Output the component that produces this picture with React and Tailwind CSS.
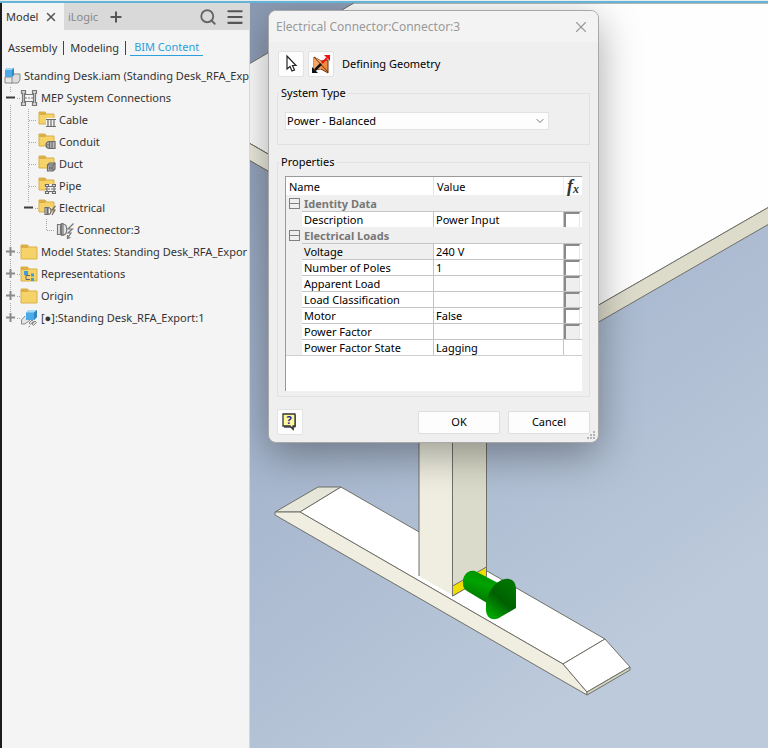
import { useState } from "react";
import { Menu, Plus, Search, X, ChevronDown } from "lucide-react";

const TREE = [
  { label: "MEP System Connections", depth: 1, toggle: "minus", icon: "mep" },
  { label: "Cable", depth: 2, icon: "cable" },
  { label: "Conduit", depth: 2, icon: "conduit" },
  { label: "Duct", depth: 2, icon: "duct" },
  { label: "Pipe", depth: 2, icon: "pipe" },
  { label: "Electrical", depth: 2, toggle: "minus", icon: "electrical" },
  { label: "Connector:3", depth: 3, icon: "connector" },
  { label: "Model States: Standing Desk_RFA_Expor", depth: 1, toggle: "plus", icon: "folder" },
  { label: "Representations", depth: 1, toggle: "plus", icon: "views" },
  { label: "Origin", depth: 1, toggle: "plus", icon: "folder" },
  { label: "[●]:Standing Desk_RFA_Export:1", depth: 1, toggle: "plus", icon: "part", last: true },
];

const GROUPS = [
  {
    title: "Identity Data",
    rows: [{ name: "Description", value: "Power Input", check: "on" }],
  },
  {
    title: "Electrical Loads",
    rows: [
      { name: "Voltage", value: "240 V", check: "on", selected: true },
      { name: "Number of Poles", value: "1", check: "on" },
      { name: "Apparent Load", value: "", check: "off" },
      { name: "Load Classification", value: "", check: "off" },
      { name: "Motor", value: "False", check: "on" },
      { name: "Power Factor", value: "", check: "off" },
      { name: "Power Factor State", value: "Lagging" },
    ],
  },
];

function FolderShape({ small }) {
  return small ? (
    <>
      <path d="M1 2h6l1.500 2H16v10H1z" fill="#f6d368" stroke="#d9b04a" strokeWidth="1" />
      <path d="M1 2h6l1.500 2L7 5H1z" fill="#dcae45" />
    </>
  ) : (
    <>
      <path d="M1 3h6.500l1.500 2H17v12H1z" fill="#f6d368" stroke="#d9b04a" strokeWidth="1" />
      <path d="M1 3h6.500l1.500 2L7.500 6H1z" fill="#dcae45" />
    </>
  );
}

function TreeIcon({ name }) {
  const gray = { fill: "none", stroke: "#6b6b6b", strokeWidth: 1.2 };
  return (
    <svg className="h-5 w-[18px] shrink-0" viewBox="0 0 18 20" aria-hidden="true">
      {name === "mep" && (
        <g fill="none" stroke="#777" strokeWidth="1.200">
          <path d="M1.500 2.500h4v3h-1v9h1v3h-4v-3h1v-9h-1zM12.500 2.500h4v3h-1v9h1v3h-4v-3h1v-9h-1z" fill="#d4d4d4" />
          <path d="M5 6.500h8M5 13.500h8" />
          <path d="M5 10h8" strokeDasharray="2 1" strokeWidth="1" />
        </g>
      )}
      {["cable", "conduit", "duct", "pipe", "electrical"].includes(name) && <FolderShape small />}
      {name === "cable" && (
        <g {...gray}>
          <path d="M8 8h10v9H8z" fill="#f4f4f4" stroke="none" />
          <path d="M8 9.500h10M8 16.500h10M10 9.500v7M13 9.500v7M16 9.500v7" />
        </g>
      )}
      {name === "conduit" && (
        <g {...gray}>
          <path d="M11 9.500h6v7h-6c-4-1-4-6 0-7z" fill="#bbb" />
          <path d="M11.500 9.500v7M14 9.500v7M8.500 13H12" />
        </g>
      )}
      {name === "duct" && (
        <g {...gray}>
          <path d="M9.500 11l2-2H17v6l-2 2H9.500z" fill="#bbb" />
          <path d="M9.500 11H15v6M15 11l2-2M11.500 13h2v2h-2z" />
        </g>
      )}
      {name === "pipe" && (
        <g {...gray}>
          <path d="M7 8h11v10H7z" fill="#f4f4f4" stroke="none" />
          <path d="M7.500 8.500h3v2h-3zM14.500 8.500h3v2h-3zM7.500 15.500h3v2h-3zM14.500 15.500h3v2h-3zM9 10.500v5M16 10.500v5M10.500 10.500h4M10.500 15.500h4" />
          <path d="M7 13h11" strokeDasharray="2 1" />
        </g>
      )}
      {name === "electrical" && (
        <g {...gray}>
          <path d="M6.500 9h7v8h-7z" fill="#f4f4f4" stroke="none" />
          <path d="M7 9.500h2v7H7zM10 9.500c4 0 4 7 0 7zM17.500 8l-3.500 4h3l-3 5" />
        </g>
      )}
      {name === "connector" && (
        <g {...gray} stroke="#777">
          <path d="M1.500 4.500h3v10h-3zM5.500 3.500h1.500v12H5.500zM7 4c5 0 5 11 0 11z" fill="#e4e4e4" />
          <path d="M17.500 3.500L12 9h4.500L12 13h3l-3.500 5M11.500 15v3.500l3-1" />
        </g>
      )}
      {(name === "folder" || name === "views") && <FolderShape />}
      {name === "views" && (
        <g>
          <path d="M4 7h4v4H4zM11 9.500h3v3h-3zM11 14h3v3h-3z" fill="#3d9fd6" />
          <path d="M6 11v4.500h4M6 11.500h4" fill="none" stroke="#666" />
        </g>
      )}
      {name === "part" && (
        <g>
          <path d="M5 8L1.500 12v4H5l5-4" fill="#e4e4e4" stroke="#888" />
          <path d="M6 4.500l3-2.500h8v7l-3 3H6z" fill="#4cabe6" />
          <path d="M6 4.500l3-2.500h8l-3 2.500z" fill="#a6dbf7" />
          <path d="M14 4.500L17 2v7l-3 3z" fill="#2f86c0" />
          <path d="M9 15l3-3 1.500 1.500-3 3zM12 16l3-3 1.500 1.500-3 3zM10 18l-1.500 1" fill="#ddd" stroke="#888" />
        </g>
      )}
    </svg>
  );
}

function Guide({ line, half, branch }) {
  return (
    <svg className="h-[22px] w-[18px] shrink-0" viewBox="0 0 18 22" aria-hidden="true">
      <g stroke="#a8a8a8" strokeDasharray="1 1">
        {line && <path d={half ? "M8.500 0v11" : "M8.500 0v22"} />}
        {branch && <path d="M9 11.500h8" />}
      </g>
    </svg>
  );
}

function Toggle({ kind, label, last }) {
  return (
    <button type="button" aria-label={`Toggle ${label}`} className="h-[22px] w-[18px] shrink-0">
      <svg className="h-[22px] w-[18px]" viewBox="0 0 18 22">
        <path d={last ? "M8.500 0v5" : "M8.500 0v5M8.500 18v4"} stroke="#a8a8a8" strokeDasharray="1 1" />
        <path d="M15 11.500h3" stroke="#a8a8a8" strokeDasharray="1 1" />
        {kind === "minus" ? (
          <path d="M4 10.500h9" stroke="#3c3c3c" strokeWidth="2" />
        ) : (
          <path d="M4 10.500h9M8.500 6v9" stroke="#8a8a8a" strokeWidth="2" />
        )}
      </svg>
    </button>
  );
}

function TreeRow({ item }) {
  const { label, depth, toggle, icon, last } = item;
  return (
    <li className="flex h-[22px] items-center">
      {depth > 1 && <Guide line />}
      {depth > 2 && <Guide />}
      {toggle ? <Toggle kind={toggle} label={label} last={last || depth === 2} /> : <Guide line half={depth === 3} branch />}
      <TreeIcon name={icon} />
      <span className="ml-[3px] whitespace-nowrap">{label}</span>
    </li>
  );
}

function BrowserPanel() {
  return (
    <aside className="w-[250px] shrink-0 overflow-hidden border-r border-l-2 border-r-[#d4d8de] border-l-[#1c1c1f] bg-[#f4f4f4] text-[#333]">
      <div className="flex h-[27px] items-center bg-[#d9d9d9]">
        <div className="flex h-full w-[62px] items-center justify-between bg-[#f4f4f4] pr-1.5 pl-1">
          <button type="button">Model</button>
          <button type="button" aria-label="Close Model tab">
            <X className="size-3.5 text-[#555]" strokeWidth={2.5} />
          </button>
        </div>
        <button type="button" className="ml-1 text-[#888]">iLogic</button>
        <button type="button" aria-label="Add tab" className="ml-2.5">
          <Plus className="size-4 text-[#555]" strokeWidth={3} />
        </button>
        <button type="button" aria-label="Search" className="ml-auto">
          <Search className="size-[18px] text-[#666]" strokeWidth={2.5} />
        </button>
        <button type="button" aria-label="Menu" className="mr-1 ml-2">
          <Menu className="size-5 text-[#555]" strokeWidth={2.5} />
        </button>
      </div>

      <nav className="flex h-[35px] items-center pl-1">
        <a href="#assembly" className="px-0.5">Assembly</a>
        <span className="mx-1 h-3.5 w-px bg-[#444]" />
        <a href="#modeling" className="px-0.5">Modeling</a>
        <span className="mx-1 h-3.5 w-px bg-[#444]" />
        <a href="#bim" className="border-b border-[#2ba0dc] px-1 text-[#2ba0dc]">BIM Content</a>
      </nav>

      <div className="flex h-[22px] items-center pl-0.5">
        <svg className="h-5 w-[18px] shrink-0" viewBox="0 0 18 20" aria-hidden="true">
          <path d="M7 10l2-2h7v6l-2 3H7z" fill="#ddd" stroke="#888" />
          <path d="M1 11h7v6H1z" fill="#e8e8e8" stroke="#888" />
          <path d="M1 4l2-2h7v7l-2 2H1z" fill="#4cabe6" />
          <path d="M1 4l2-2h7L8 4z" fill="#9ad4f5" />
          <path d="M8 4l2-2v7l-2 2z" fill="#2f86c0" />
        </svg>
        <span className="ml-0.5 whitespace-nowrap">Standing Desk.iam (Standing Desk_RFA_Exp</span>
      </div>
      <ul>
        {TREE.map((item) => (
          <TreeRow key={item.label} item={item} />
        ))}
      </ul>
    </aside>
  );
}

function Scene() {
  return (
    <svg className="absolute inset-0 h-full w-full" viewBox="250 3 518 745" preserveAspectRatio="xMinYMin slice" aria-label="Standing desk model">
      <defs>
        <linearGradient id="sky" x1="0" y1="0" x2="0.500" y2="1">
          <stop offset="0" stopColor="#8c9bb4" />
          <stop offset="0.500" stopColor="#a6b6cd" />
          <stop offset="1" stopColor="#bdcadc" />
        </linearGradient>
        <linearGradient id="shaft" x1="0.700" y1="0" x2="0.300" y2="1">
          <stop offset="0" stopColor="#008a00" />
          <stop offset="0.400" stopColor="#00a400" />
          <stop offset="1" stopColor="#007000" />
        </linearGradient>
        <linearGradient id="cone" x1="0.800" y1="0.200" x2="0.300" y2="1">
          <stop offset="0" stopColor="#007200" />
          <stop offset="0.450" stopColor="#006000" />
          <stop offset="1" stopColor="#00a600" />
        </linearGradient>
      </defs>
      <path d="M250 3h518v745H250z" fill="url(#sky)" />
      <g stroke="#6f7068" strokeWidth="1" strokeLinejoin="round">
        {/* desk top */}
        <path d="M249 64L354 3H769V207L564 325 249 143z" fill="#fefefe" />
        <path d="M249 143L564 325 769 207V224L564 342 249 160z" fill="#dddccb" />
        <path d="M249 143L564 325V342L249 160z" fill="#ecebdd" />

        {/* foot */}
        <path d="M275 512L318 487H341L300 512z" fill="#e7e8da" />
        <path d="M300 512L341 487 605 639 563 664z" fill="#fff" />
        <path d="M275 512H300L563 664 587 692V695L275 515z" fill="#efeee0" />
        <path d="M563 664L605 639 630 667 587 692z" fill="#fff" />
        <path d="M587 692L630 667V670L587 695z" fill="#d5d5c4" />

        {/* leg */}
        <path d="M419 430H452.500V595L419 576z" fill="#efeee0" stroke="none" />
        <path d="M452.500 430H486.500V576L452.500 596z" fill="#dadbca" />
        <path d="M419 430V576" />
        <path d="M452.500 586L486.500 567V576.500L452.500 596z" fill="#f0de00" />
      </g>
      <path d="M463 583C462 576 468 569 475 571L498 583 487 603 467 591C464 589 463 587 463 583z" fill="url(#shaft)" />
      <path d="M486 606C486 592 498 577 509 579 514 580 516 584 516 589V608L498 618.500C490 621 485 616 486 606z" fill="url(#cone)" />
    </svg>
  );
}

function PropertyTable() {
  return (
    <table className="w-full table-fixed border-separate border-spacing-0 text-left">
      <colgroup>
        <col className="w-4" />
        <col className="w-[132px]" />
        <col />
        <col className="w-[18px]" />
      </colgroup>
      <thead>
        <tr className="h-[18px]">
          <th colSpan={2} className="border-r border-[#e4e4e4] p-0 pl-[3px] font-normal">Name</th>
          <th className="border-r border-[#eee] p-0 pl-[3px] font-normal">Value</th>
          <th className="p-0 font-['Liberation_Serif',serif] text-lg font-bold text-[#333] italic">
            <span className="flex h-[18px] items-center justify-center leading-[18px]">
              f<sub className="text-xs">x</sub>
            </span>
          </th>
        </tr>
      </thead>
      {GROUPS.map((group) => (
        <tbody key={group.title}>
          <tr className="h-4 bg-[#efefef]">
            <td className="p-0">
              <button type="button" aria-label={`Collapse ${group.title}`} className="ml-[3px] flex size-[11px] items-center border border-[#808080]">
                <span className="h-px w-full bg-[#808080]" />
              </button>
            </td>
            <th colSpan={3} className="p-0 pl-0.5 font-bold text-[#777]">{group.title}</th>
          </tr>
          {group.rows.map((row) => (
            <tr key={row.name} className="h-4">
              <td className="bg-[#efefef] p-0" />
              <td className={`border-t border-r border-[#c4c4c4] p-0 pl-0.5 ${row.selected ? "bg-[#efefef]" : ""}`}>{row.name}</td>
              <td className="border-t border-r border-[#c4c4c4] p-0 pl-0.5">{row.value}</td>
              <td className="border-t border-[#c4c4c4] p-0">
                {row.check && (
                  <input
                    type="checkbox"
                    aria-label={`Export ${row.name}`}
                    disabled={row.check === "off"}
                    className="block h-[15px] w-4 appearance-none border-t-2 border-r border-l-2 border-t-[#8a8a8a] border-r-[#e6e6e6] border-l-[#8a8a8a] bg-white disabled:bg-[#efefef]"
                  />
                )}
              </td>
            </tr>
          ))}
        </tbody>
      ))}
      <tfoot>
        <tr>
          <td colSpan={4} className="h-px bg-[#d0d0d0] p-0" />
        </tr>
      </tfoot>
    </table>
  );
}

function ConnectorDialog() {
  const [system, setSystem] = useState("balanced");
  const tool = "flex size-[26px] items-center justify-center rounded-xs border border-[#e2e2e2] bg-[#fdfdfd]";
  const action = "h-[23px] w-[82px] rounded-xs border border-[#dedede] bg-[#fdfdfd]";

  return (
    <section
      role="dialog"
      aria-label="Electrical Connector"
      className="absolute top-[7px] left-[18px] flex w-[331px] flex-col overflow-hidden rounded-lg border border-[#a8a8a8] bg-[#efefef] pb-[7px] text-black shadow-[0_12px_40px_rgba(0,0,0,0.35)]"
    >
      <header className="flex h-[31px] shrink-0 items-center justify-between bg-[#f3f3f3] pr-2 pl-[7px] text-[#999]">
        <h1 className="text-xs">Electrical Connector:Connector:3</h1>
        <button type="button" aria-label="Close">
          <X className="size-[18px]" strokeWidth={1.5} />
        </button>
      </header>

      <div className="flex items-center gap-1 px-[9px] pt-[9px]">
        <button type="button" aria-label="Select" className={tool}>
          <svg className="h-5 w-4" viewBox="0 0 16 20">
            <path d="M4 2v13l3-2.500 2 4.500 2.500-1-2-4.500h3.500z" fill="#fff" stroke="#222" strokeWidth="1.200" />
          </svg>
        </button>
        <button type="button" aria-label="Flip direction" className={tool}>
          <svg className="size-5" viewBox="0 0 20 20">
            <path d="M3 3l7 4 7-1v13l-7-4-7 1z" fill="#f08a3c" stroke="#6b3512" />
            <path d="M3 3l7 4v8l-7 1z" fill="#f7a565" />
            <path d="M3 3l14 15" stroke="#6b3512" />
            <path d="M11 9l5-5" stroke="#e11" strokeWidth="2" />
            <path d="M13 1h6v6z" fill="#e11" />
            <path d="M10 10l-6 6" stroke="#111" strokeWidth="2.500" />
            <path d="M1 13v6h6z" fill="#111" />
          </svg>
        </button>
        <span className="ml-1">Defining Geometry</span>
      </div>

      <fieldset className="mx-2 mt-2 h-[60px] border border-[#e2e2e2] px-[7px] pt-[11px]">
        <legend className="-ml-1.5 px-0.5 leading-4">System Type</legend>
        <div className="relative w-[264px]">
          <select
            aria-label="System Type"
            value={system}
            onChange={(e) => setSystem(e.target.value)}
            className="block h-[18px] w-full appearance-none border border-[#e2e2e2] bg-[#fdfdfd] pl-px"
          >
            <option value="balanced">Power - Balanced</option>
            <option value="unbalanced">Power - Unbalanced</option>
          </select>
          <ChevronDown className="pointer-events-none absolute top-[3px] right-[3px] size-3 text-[#777]" />
        </div>
      </fieldset>

      <fieldset className="mx-2 mt-[9px] h-[243px] border border-[#e2e2e2] px-[7px] pt-1.5">
        <legend className="-ml-1.5 px-0.5 leading-4">Properties</legend>
        <div className="h-[215px] overflow-hidden border-t border-l border-[#9a9a9a] bg-white leading-[15px]">
          <PropertyTable />
        </div>
      </fieldset>

      <footer className="flex items-center gap-2 px-2 pt-3">
        <button type="button" aria-label="Help" className={tool}>
          <svg className="size-5" viewBox="0 0 20 20">
            <path d="M4 3h12v12l-2 1v3l-3-3H4z" fill="#777" />
            <path d="M3 2h12v12h-2v3l-3-3H3z" fill="#fdfa9c" stroke="#333" strokeWidth="1.300" />
            <text x="9" y="12" textAnchor="middle" fontSize="11" fontWeight="bold" fill="#22229a">?</text>
          </svg>
        </button>
        <button type="button" className={`ml-auto ${action}`}>OK</button>
        <button type="button" className={action}>Cancel</button>
      </footer>
      <svg className="absolute right-0.5 bottom-0.5 size-2.5" viewBox="0 0 10 10" aria-hidden="true">
        <path d="M7 1h2v2H7zM4 4h2v2H4zM7 4h2v2H7zM1 7h2v2H1zM4 7h2v2H4zM7 7h2v2H7z" fill="#b4b4b4" />
      </svg>
    </section>
  );
}

export default function App() {
  return (
    <div className="flex min-h-screen flex-col bg-[#f4f4f4] font-['Noto_Sans',sans-serif] text-[11px] leading-4">
      <div className="h-[3px] shrink-0 border-b-2 border-[#62b5d8] bg-[#ececec]" />
      <div className="flex flex-1">
        <BrowserPanel />
        <main className="relative min-w-0 flex-1 overflow-hidden">
          <Scene />
          <ConnectorDialog />
        </main>
      </div>
    </div>
  );
}
